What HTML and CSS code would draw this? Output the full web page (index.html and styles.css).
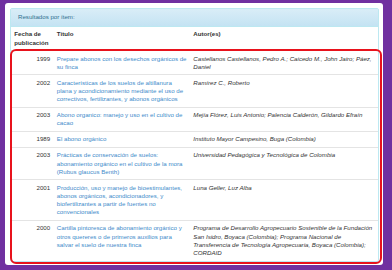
FILE: index.html
```html
<!DOCTYPE html>
<html lang="es">
<head>
<meta charset="utf-8">
<title>Resultados por ítem</title>
<link rel="stylesheet" href="styles.css">
</head>
<body>
<div class="frame">
  <div class="panel">
    <div class="panel-heading">Resultados por ítem:</div>
    <table class="results">
      <colgroup>
        <col class="c-date">
        <col class="c-title">
        <col class="c-author">
      </colgroup>
      <thead>
        <tr>
          <th>Fecha de publicación</th>
          <th>Título</th>
          <th>Autor(es)</th>
        </tr>
      </thead>
      <tbody>
        <tr>
          <td class="year">1999</td>
          <td><a href="#">Prepare abonos con los desechos orgánicos de su finca</a></td>
          <td class="author">Castellanos Castellanos, Pedro A.; Caicedo M., John Jairo; Páez, Daniel</td>
        </tr>
        <tr>
          <td class="year">2002</td>
          <td><a href="#">Características de los suelos de altillanura plana y acondicionamiento mediante el uso de correctivos, fertilizantes, y abonos orgánicos</a></td>
          <td class="author">Ramírez C., Roberto</td>
        </tr>
        <tr>
          <td class="year">2003</td>
          <td><a href="#">Abono organico: manejo y uso en el cultivo de cacao</a></td>
          <td class="author">Mejía Flórez, Luis Antonio; Palencia Calderón, Gildardo Efraín</td>
        </tr>
        <tr>
          <td class="year">1989</td>
          <td><a href="#">El abono orgánico</a></td>
          <td class="author">Instituto Mayor Campesino, Buga (Colombia)</td>
        </tr>
        <tr>
          <td class="year">2003</td>
          <td><a href="#">Prácticas de conservación de suelos: abonamiento orgánico en el cultivo de la mora (Rubus glaucus Benth)</a></td>
          <td class="author">Universidad Pedagógica y Tecnológica de Colombia</td>
        </tr>
        <tr>
          <td class="year">2001</td>
          <td><a href="#">Producción, uso y manejo de bioestimulantes, abonos orgánicos, acondicionadores, y biofertilizantes a partir de fuentes no convencionales</a></td>
          <td class="author">Luna Geller, Luz Alba</td>
        </tr>
        <tr>
          <td class="year">2000</td>
          <td><a href="#">Cartilla pintoresca de abonamiento orgánico y otros quereres o de primeros auxilios para salvar el suelo de nuestra finca</a></td>
          <td class="author">Programa de Desarrollo Agropecuario Sostenible de la Fundación San Isidro, Boyaca (Colombia); Programa Nacional de Transferencia de Tecnología Agropecuaria, Boyaca (Colombia); CORDAID</td>
        </tr>
      </tbody>
    </table>
  </div>
  <div class="highlight"></div>
</div>
</body>
</html>
```

FILE: styles.css
```css
* { box-sizing: border-box; }

html, body {
  margin: 0;
  height: 100%;
}

body {
  background: #7030a0;
  padding: 3px 9px 5px 5px;
  font-family: "Liberation Sans", Arial, sans-serif;
  font-size: 6.15px;
  line-height: 8.2px;
  color: #333;
}

.frame {
  position: relative;
  background: #fff;
  height: 262px;
  border-radius: 3px;
  padding: 5px 4px 0 5px;
}

.panel {
  border: 1px solid #bce8f1;
  border-radius: 2px;
  background: #fff;
}

.panel-heading {
  background: linear-gradient(#d9edf7, #c4e3f3);
  color: #31708f;
  padding: 4.4px 7px 4.4px 7px;
  border-bottom: 1px solid #bce8f1;
}

.results {
  width: 100%;
  border-collapse: collapse;
  table-layout: fixed;
}

.c-date { width: 42.5px; }
.c-title { width: 136.5px; }

.results th,
.results td {
  padding: 3.4px 3.3px;
  vertical-align: top;
  text-align: left;
}

.results th {
  font-weight: bold;
  border-bottom: 1px solid #ddd;
}

.results td {
  border-top: 1px solid #e4e4e4;
}

.results tbody tr:first-child td {
  border-top: none;
}

.results td.year {
  text-align: right;
}

.results a {
  color: #428bca;
  text-decoration: none;
}

.author {
  font-style: italic;
}

.highlight {
  position: absolute;
  left: 5px;
  top: 46px;
  width: 372px;
  height: 215px;
  border: 2.3px solid #e8121c;
  border-radius: 6px;
  pointer-events: none;
}
```
